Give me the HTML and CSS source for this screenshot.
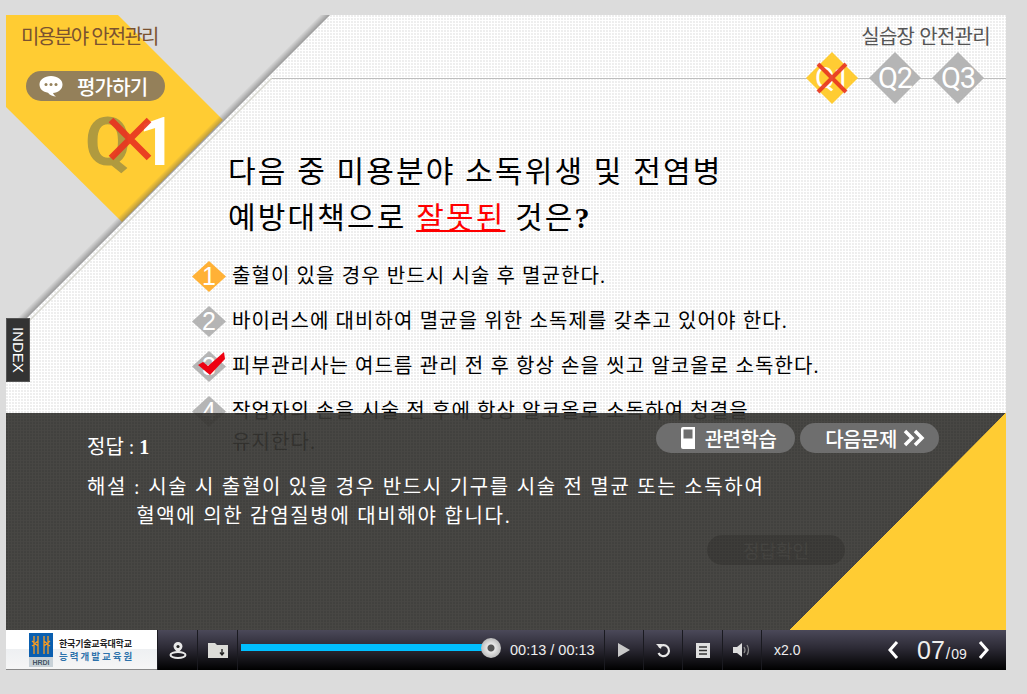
FILE: index.html
```html
<!DOCTYPE html>
<html lang="ko">
<head>
  <meta charset="UTF-8" />
  <meta name="viewport" content="width=device-width, initial-scale=1.0" />
  <title>미용분야 안전관리</title>
  <link rel="stylesheet" href="styles.css">
</head>
<body>
  <div class="page">
    <div class="slide">
      <svg class="corner" width="360" height="360" viewBox="0 0 360 360">
        <defs>
          <linearGradient id="edge" gradientUnits="userSpaceOnUse" x1="157" y1="157" x2="162" y2="162">
            <stop offset="0" stop-color="#555" stop-opacity="0"/>
            <stop offset="1" stop-color="#555" stop-opacity=".5"/>
          </linearGradient>
        </defs>
        <polygon points="0,0 324,0 0,324" fill="#dcdcdc"/>
        <polygon points="0,0 112,0 217,105 116,207 0,92" fill="#ffcc33"/>
        <polygon points="311,0 324,0 0,324 0,311" fill="url(#edge)"/>
        <line x1="266" y1="63" x2="14" y2="315" stroke="#d8d8d0" stroke-width="1.5"/>
      </svg>
      <div class="top-line"></div>

      <div class="head">
        <div class="head-left">
          <div class="unit-title">미용분야 안전관리</div>
          <div class="eval-pill">
            <svg width="26" height="26" viewBox="0 0 26 26">
              <path d="M13 3c6.500 0 11.500 3.600 11.500 8.500S20 20 15 20c.5 1.500 1.500 2.500 3 3.500-3 0-6-1.200-8-3.800C5 19 1.500 16 1.500 11.500 1.500 6.600 6.500 3 13 3z" fill="#fff"/>
              <circle cx="8" cy="11.500" r="1.500" fill="#94805a"/><circle cx="13" cy="11.500" r="1.500" fill="#94805a"/><circle cx="18" cy="11.500" r="1.500" fill="#94805a"/>
            </svg>
            <span>평가하기</span>
          </div>
          <div class="q-mark">
            <span class="q-letter">Q</span><span class="q-num">1</span>
            <svg class="q-x" width="44" height="44" viewBox="0 0 44 44"><path d="M3 3l38 38M41 3L3 41" stroke="#e8341f" stroke-opacity=".92" stroke-width="6.500"/></svg>
          </div>
        </div>
        <div class="head-right">
          <div class="unit-sub">실습장 안전관리</div>
          <div class="quiz-nav">
            <div class="quiz-step is-done">
              <span class="quiz-diamond">Q1</span>
              <svg class="quiz-x" width="34" height="34" viewBox="0 0 34 34"><path d="M3 3l28 28M31 3L3 31" stroke="#e8341f" stroke-opacity=".9" stroke-width="4"/></svg>
            </div>
            <div class="quiz-step"><span class="quiz-diamond">Q2</span></div>
            <div class="quiz-step"><span class="quiz-diamond">Q3</span></div>
          </div>
        </div>
      </div>

      <div class="question">
        <p>다음 중 미용분야 소독위생 및 전염병</p>
        <p>예방대책으로 <u>잘못된</u> 것은<b>?</b></p>
      </div>

      <ol class="options">
        <li class="option is-answer"><span class="opt-num">1</span><span>출혈이 있을 경우 반드시 시술 후 멸균한다.</span></li>
        <li class="option"><span class="opt-num">2</span><span>바이러스에 대비하여 멸균을 위한 소독제를 갖추고 있어야 한다.</span></li>
        <li class="option">
          <span class="opt-num">3</span>
          <svg class="opt-check" width="28" height="24" viewBox="0 0 28 24"><path d="M0 13l5-3 5 4L26 0l1 7-15 16z" fill="#ee0011"/></svg>
          <span>피부관리사는 여드름 관리 전 후 항상 손을 씻고 알코올로 소독한다.</span>
        </li>
        <li class="option"><span class="opt-num">4</span><span>작업자의 손을 시술 전 후에 항상 알코올로 소독하여 청결을<br>유지한다.</span></li>
      </ol>

      <div class="check-btn">정답확인</div>
      <div class="index-tab">INDEX</div>

      <div class="answer-panel">
        <div class="panel-btns">
          <div class="panel-btn btn-study">
            <svg width="16" height="22" viewBox="0 0 16 22"><path d="M1 2a2 2 0 0 1 2-2h12v22H3a2 2 0 0 1-2-2z" fill="#fff"/><rect x="3.500" y="2.500" width="9" height="9" fill="#6e6e6e"/></svg>
            <span>관련학습</span>
          </div>
          <div class="panel-btn btn-next">
            <span>다음문제</span>
            <svg width="22" height="18" viewBox="0 0 22 18"><path d="M2 2l7 7-7 7M12 2l7 7-7 7" fill="none" stroke="#fff" stroke-width="3.500"/></svg>
          </div>
        </div>
        <p class="answer-line">정답 : <b>1</b></p>
        <div class="explain">
          <span class="explain-label">해설 :</span>
          <span>시술 시 출혈이 있을 경우 반드시 기구를 시술 전 멸균 또는 소독하여<br><span class="explain-indent">혈액에 의한 감염질병에 대비해야 합니다.</span></span>
        </div>
      </div>
    </div>

    <div class="player">
      <div class="brand">
        <svg width="24" height="34" viewBox="0 0 24 34">
          <rect width="24" height="24" fill="#0a5fb0"/>
          <path d="M5 3v18M9 3v18M15 3v18M19 3v18M3 8l6 5M9 8l-6 5M15 8l6 5M21 8l-6 5" stroke="#f29a26" stroke-width="1.300" fill="none"/>
          <rect y="24" width="24" height="10" fill="#c9d2d8"/>
          <text x="12" y="32" text-anchor="middle" class="brand-mark">HRDI</text>
        </svg>
        <div class="brand-text">
          <div class="brand-line1">한국기술교육대학교</div>
          <div class="brand-line2">능력개발교육원</div>
        </div>
      </div>
      <div class="ctrl">
        <svg width="18" height="18" viewBox="0 0 18 18"><path d="M9 1a4.500 4.500 0 0 1 4.500 4.500C13.500 8 10.500 10 9 12 7.500 10 4.500 8 4.500 5.500A4.500 4.500 0 0 1 9 1z" fill="#e8e8e8"/><circle cx="9" cy="5.500" r="1.600" fill="#222"/><ellipse cx="9" cy="14" rx="7.500" ry="3" fill="none" stroke="#e8e8e8" stroke-width="2"/></svg>
      </div>
      <div class="ctrl">
        <svg width="20" height="16" viewBox="0 0 20 16"><path d="M0 1h7l2 2h11v13H0z" fill="#dcdcd8"/><path d="M14 7v5M12 10.500l2 2.500 2-2.500" stroke="#222" stroke-width="1.400" fill="none"/></svg>
      </div>
      <div class="seek">
        <div class="seek-track"><div class="seek-fill"></div></div>
        <div class="seek-knob"></div>
      </div>
      <div class="time">00:13 / 00:13</div>
      <div class="ctrl ctrl-sm">
        <svg width="12" height="14" viewBox="0 0 12 14"><path d="M0 0l12 7-12 7z" fill="#c8c8c8"/></svg>
      </div>
      <div class="ctrl ctrl-sm">
        <svg width="16" height="16" viewBox="0 0 16 16"><path d="M4 5.500A5.500 5.500 0 1 1 3.500 11" fill="none" stroke="#e8e8e8" stroke-width="2.200"/><path d="M1 2l6 0-1 5z" fill="#e8e8e8"/></svg>
      </div>
      <div class="ctrl">
        <svg width="14" height="15" viewBox="0 0 14 15"><path d="M0 0h14v15H0z" fill="#e0e0e0"/><path d="M3 4h8M3 7.500h8M3 11h8" stroke="#333" stroke-width="1.500"/></svg>
      </div>
      <div class="ctrl ctrl-sm">
        <svg width="18" height="14" viewBox="0 0 18 14"><path d="M0 4h4l5-4v14l-5-4H0z" fill="#ddd"/><path d="M11 4q2 3 0 6M14 2q3 5 0 10" fill="none" stroke="#888" stroke-width="1.300"/></svg>
      </div>
      <div class="speed">x2.0</div>
      <div class="pager">
        <svg width="12" height="20" viewBox="0 0 12 20"><path d="M10 2L3 10l7 8" fill="none" stroke="#fff" stroke-width="3"/></svg>
        <div class="page-num"><span class="page-cur">07</span><span class="page-sep">/</span><span class="page-all">09</span></div>
        <svg width="12" height="20" viewBox="0 0 12 20"><path d="M2 2l7 8-7 8" fill="none" stroke="#fff" stroke-width="3"/></svg>
      </div>
    </div>
  </div>
</body>
</html>
```

FILE: styles.css
```css
body { margin: 0; background: #dcdcdc; font-family: "Noto Sans CJK KR", "Liberation Sans", sans-serif; }
p { margin: 0; }
.page { width: 1000px; padding: 15px 21px 24px 6px; }

.slide { position: relative; height: 615px; overflow: hidden; background: #fff radial-gradient(circle at 1px 1px, #eee .7px, transparent 1px) 0 0 / 3px 3px; }
.corner { position: absolute; left: 0; top: 0; }
.top-line { position: absolute; left: 266px; right: 0; top: 63px; height: 1px; background: #bdbdbd; }

.head { position: relative; height: 134px; display: flex; justify-content: space-between; }
.head-left { padding: 7px 0 0 15px; }
.unit-title { font-size: 20px; line-height: 28px; letter-spacing: -1.800px; color: #7a5230; }
.eval-pill { display: flex; align-items: center; gap: 13px; width: 139px; height: 30px; margin: 21px 0 0 5px; padding-left: 12px; box-sizing: border-box; border-radius: 15px; background: #94805a; color: #fff; font-size: 20px; font-weight: 500; letter-spacing: -.8px; }
.q-mark { position: relative; height: 56px; margin: 14px 0 0 64px; font-family: Roboto, sans-serif; font-weight: 700; font-size: 66px; line-height: 56px; white-space: nowrap; }
.q-letter { color: #b09a3f; }
.q-num { margin-left: 8px; color: #fff; }
.q-x { position: absolute; left: 23px; top: 2px; }

.head-right { padding: 7px 16px 0 0; display: flex; flex-direction: column; align-items: flex-end; }
.unit-sub { font-size: 20px; line-height: 28px; letter-spacing: -.7px; color: #555; }
.quiz-nav { display: flex; gap: 11px; margin: 2px 6px 0 0; }
.quiz-step { position: relative; width: 52px; height: 52px; }
.quiz-diamond { display: flex; align-items: center; justify-content: center; height: 100%; clip-path: polygon(50% 0, 100% 50%, 50% 100%, 0 50%); background: #b5b5b5; color: #fff; font-family: Roboto, sans-serif; font-size: 29px; letter-spacing: -1px; }
.is-done .quiz-diamond { background: #ffcc33; }
.quiz-x { position: absolute; left: 9px; top: 9px; }

.question { margin-left: 222px; font-family: "Liberation Serif", "Noto Sans CJK KR", serif; font-size: 30px; line-height: 46px; letter-spacing: 2.150px; color: #000; }
.question u { color: #f00; text-decoration-thickness: 2px; text-underline-offset: 2px; }

.options { list-style: none; margin: 20px 0 0 186px; padding: 0; font-family: "Liberation Serif", "Noto Sans CJK KR", serif; font-size: 20px; letter-spacing: 1.100px; color: #000; }
.option { position: relative; display: flex; gap: 6px; line-height: 31px; margin-bottom: 14px; }
.opt-num { flex: none; width: 34px; height: 31px; clip-path: polygon(50% 0, 100% 50%, 50% 100%, 0 50%); background: #b5b5b5; color: #fff; font-family: "Liberation Sans", sans-serif; font-size: 25px; letter-spacing: 0; text-align: center; }
.is-answer .opt-num { background: #ffb136; }
.opt-check { position: absolute; left: 6px; top: 1px; }

.check-btn { position: absolute; left: 701px; top: 520px; width: 138px; height: 30px; border-radius: 15px; background: #777; color: #ddd; font-size: 18px; line-height: 30px; text-align: center; }
.index-tab { position: absolute; left: 0; top: 303px; width: 24px; height: 64px; background: #333; color: #fff; border: 1px solid #555; box-sizing: border-box; font-family: "Liberation Sans", sans-serif; font-size: 15px; line-height: 22px; text-align: center; writing-mode: vertical-rl; }

.answer-panel { position: absolute; left: 0; right: 0; top: 398px; bottom: 0; box-sizing: border-box; padding: 20px 0 0 81px; color: #fff; font-family: "Liberation Serif", "Noto Sans CJK KR", serif; font-size: 20px; line-height: 29px; background: linear-gradient(to bottom right, transparent 0 49.9%, #ffcc33 50%) right bottom / 216px 217px no-repeat, radial-gradient(circle at 1px 1px, rgba(0, 0, 0, .08) .8px, transparent 1px) 0 0 / 3px 3px, rgba(56, 55, 52, .92); }
.panel-btns { position: absolute; left: 650px; top: 10px; display: flex; gap: 5px; font-family: "Noto Sans CJK KR", sans-serif; font-size: 20px; font-weight: 500; letter-spacing: -.5px; }
.panel-btn { display: flex; align-items: center; justify-content: center; width: 139px; height: 30px; box-sizing: border-box; border-radius: 15px; background: #6e6e6e; }
.btn-study { gap: 9px; padding-left: 5px; }
.btn-next { gap: 6px; padding-left: 11px; }
.answer-line { margin-bottom: 11px; }
.explain { display: flex; gap: 7px; letter-spacing: 1.700px; }
.explain-indent { margin-left: -12px; }

.player { display: flex; align-items: center; height: 40px; background: linear-gradient(#4b4959, #2c2a35 45%, #000); color: #eee; font-family: "Liberation Sans", sans-serif; }
.brand { flex: none; display: flex; align-items: center; gap: 6px; width: 151px; height: 40px; box-sizing: border-box; padding-left: 23px; background: linear-gradient(#fff 50%, #eef0f2 50%, #f6f6f6); border-bottom: 1px solid #888; }
.brand-mark { font: bold 7px "Liberation Sans", sans-serif; fill: #456; }
.brand-line1 { font: 700 9px/13px "Noto Sans CJK KR", sans-serif; color: #222; letter-spacing: -.2px; }
.brand-line2 { font: 700 9.500px/13px "Noto Sans CJK KR", sans-serif; color: #2d72ab; letter-spacing: 2px; }
.ctrl { flex: none; display: flex; align-items: center; justify-content: center; width: 40px; height: 40px; box-sizing: border-box; border-left: 1px solid #1a1a20; }
.ctrl-sm { width: 39px; }
.seek { position: relative; flex: none; width: 267px; height: 40px; box-sizing: border-box; border-left: 1px solid #1a1a20; }
.seek-track { position: absolute; left: 3px; top: 14px; width: 250px; height: 7px; background: #00bfff; }
.seek-knob { position: absolute; left: 243px; top: 8px; width: 20px; height: 20px; border-radius: 50%; background: radial-gradient(circle, #555 0 3px, #e8e8e8 4px, #bbb 10px); }
.time { flex: none; width: 100px; padding-left: 6px; box-sizing: border-box; font-size: 14.500px; white-space: nowrap; }
.speed { flex: none; width: 117px; padding-left: 12px; border-left: 1px solid #1a1a20; box-sizing: border-box; height: 40px; line-height: 40px; font-size: 14px; }
.pager { display: flex; align-items: center; margin-left: 9px; gap: 9px; }
.page-num { width: 52px; margin-left: 9px; white-space: nowrap; }
.page-cur { font-size: 25px; }
.page-sep { font-size: 16px; margin: 0 1px; }
.page-all { font-size: 14px; }
```
